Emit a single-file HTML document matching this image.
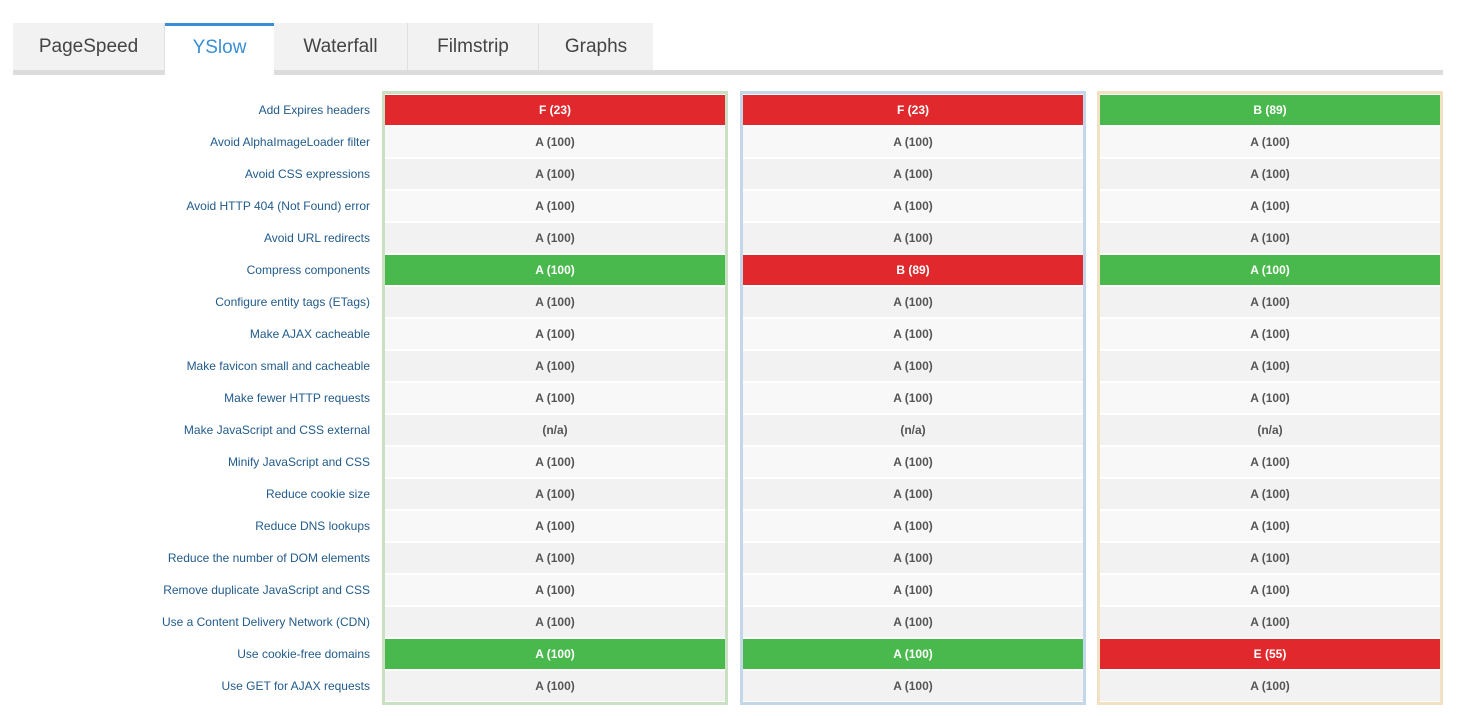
<!DOCTYPE html>
<html><head><style>
body{margin:0;background:#fff;font-family:"Liberation Sans",sans-serif;width:1457px;height:716px;position:relative;overflow:hidden}
.tabbar{position:absolute;left:13px;top:23px;width:1430px;height:47px;border-bottom:5px solid #dcdcdc}
.tab{position:absolute;top:0;height:47px;background:#f2f2f2;color:#444;font-size:19px;text-align:center;line-height:48px;box-sizing:border-box;border-right:1px solid #e0e0e0}
.tab.act{background:#fff;color:#3a8fd4;border-top:3px solid #3a8fd4;height:52px;line-height:44px;border-right:none}
.labels{position:absolute;left:0;top:95px;width:370px}
.lab{height:32px;line-height:30px;text-align:right;font-size:12px;color:#225b8c}
.col{position:absolute;top:91px;width:340px;height:607px;border:3px solid;padding-top:1px;box-sizing:content-box}
.c{height:30px;margin-bottom:2px;line-height:30px;text-align:center;font-size:12px;font-weight:bold;color:#555}
.c:nth-child(odd){background:#f2f2f2}.c:nth-child(even){background:#f8f8f8}
.c.r{background:#e1282c!important;color:#fff}.c.g{background:#4ab94d!important;color:#fff}
</style></head><body>
<div class="tabbar">
<div class="tab" style="left:0;width:152px">PageSpeed</div>
<div class="tab act" style="left:152px;width:109px">YSlow</div>
<div class="tab" style="left:261px;width:134px">Waterfall</div>
<div class="tab" style="left:395px;width:131px">Filmstrip</div>
<div class="tab" style="left:526px;width:114px;border-right:none">Graphs</div>
</div>
<div class="labels">
<div class="lab">Add Expires headers</div><div class="lab">Avoid AlphaImageLoader filter</div><div class="lab">Avoid CSS expressions</div><div class="lab">Avoid HTTP 404 (Not Found) error</div><div class="lab">Avoid URL redirects</div><div class="lab">Compress components</div><div class="lab">Configure entity tags (ETags)</div><div class="lab">Make AJAX cacheable</div><div class="lab">Make favicon small and cacheable</div><div class="lab">Make fewer HTTP requests</div><div class="lab">Make JavaScript and CSS external</div><div class="lab">Minify JavaScript and CSS</div><div class="lab">Reduce cookie size</div><div class="lab">Reduce DNS lookups</div><div class="lab">Reduce the number of DOM elements</div><div class="lab">Remove duplicate JavaScript and CSS</div><div class="lab">Use a Content Delivery Network (CDN)</div><div class="lab">Use cookie-free domains</div><div class="lab">Use GET for AJAX requests</div>
</div>
<div class="col" style="left:382px;border-color:#c9e0c2">
<div class="c r">F (23)</div><div class="c">A (100)</div><div class="c">A (100)</div><div class="c">A (100)</div><div class="c">A (100)</div><div class="c g">A (100)</div><div class="c">A (100)</div><div class="c">A (100)</div><div class="c">A (100)</div><div class="c">A (100)</div><div class="c">(n/a)</div><div class="c">A (100)</div><div class="c">A (100)</div><div class="c">A (100)</div><div class="c">A (100)</div><div class="c">A (100)</div><div class="c">A (100)</div><div class="c g">A (100)</div><div class="c">A (100)</div>
</div>
<div class="col" style="left:740px;border-color:#c4d7e9">
<div class="c r">F (23)</div><div class="c">A (100)</div><div class="c">A (100)</div><div class="c">A (100)</div><div class="c">A (100)</div><div class="c r">B (89)</div><div class="c">A (100)</div><div class="c">A (100)</div><div class="c">A (100)</div><div class="c">A (100)</div><div class="c">(n/a)</div><div class="c">A (100)</div><div class="c">A (100)</div><div class="c">A (100)</div><div class="c">A (100)</div><div class="c">A (100)</div><div class="c">A (100)</div><div class="c g">A (100)</div><div class="c">A (100)</div>
</div>
<div class="col" style="left:1097px;border-color:#f2e1c2">
<div class="c g">B (89)</div><div class="c">A (100)</div><div class="c">A (100)</div><div class="c">A (100)</div><div class="c">A (100)</div><div class="c g">A (100)</div><div class="c">A (100)</div><div class="c">A (100)</div><div class="c">A (100)</div><div class="c">A (100)</div><div class="c">(n/a)</div><div class="c">A (100)</div><div class="c">A (100)</div><div class="c">A (100)</div><div class="c">A (100)</div><div class="c">A (100)</div><div class="c">A (100)</div><div class="c r">E (55)</div><div class="c">A (100)</div>
</div>
</body></html>
